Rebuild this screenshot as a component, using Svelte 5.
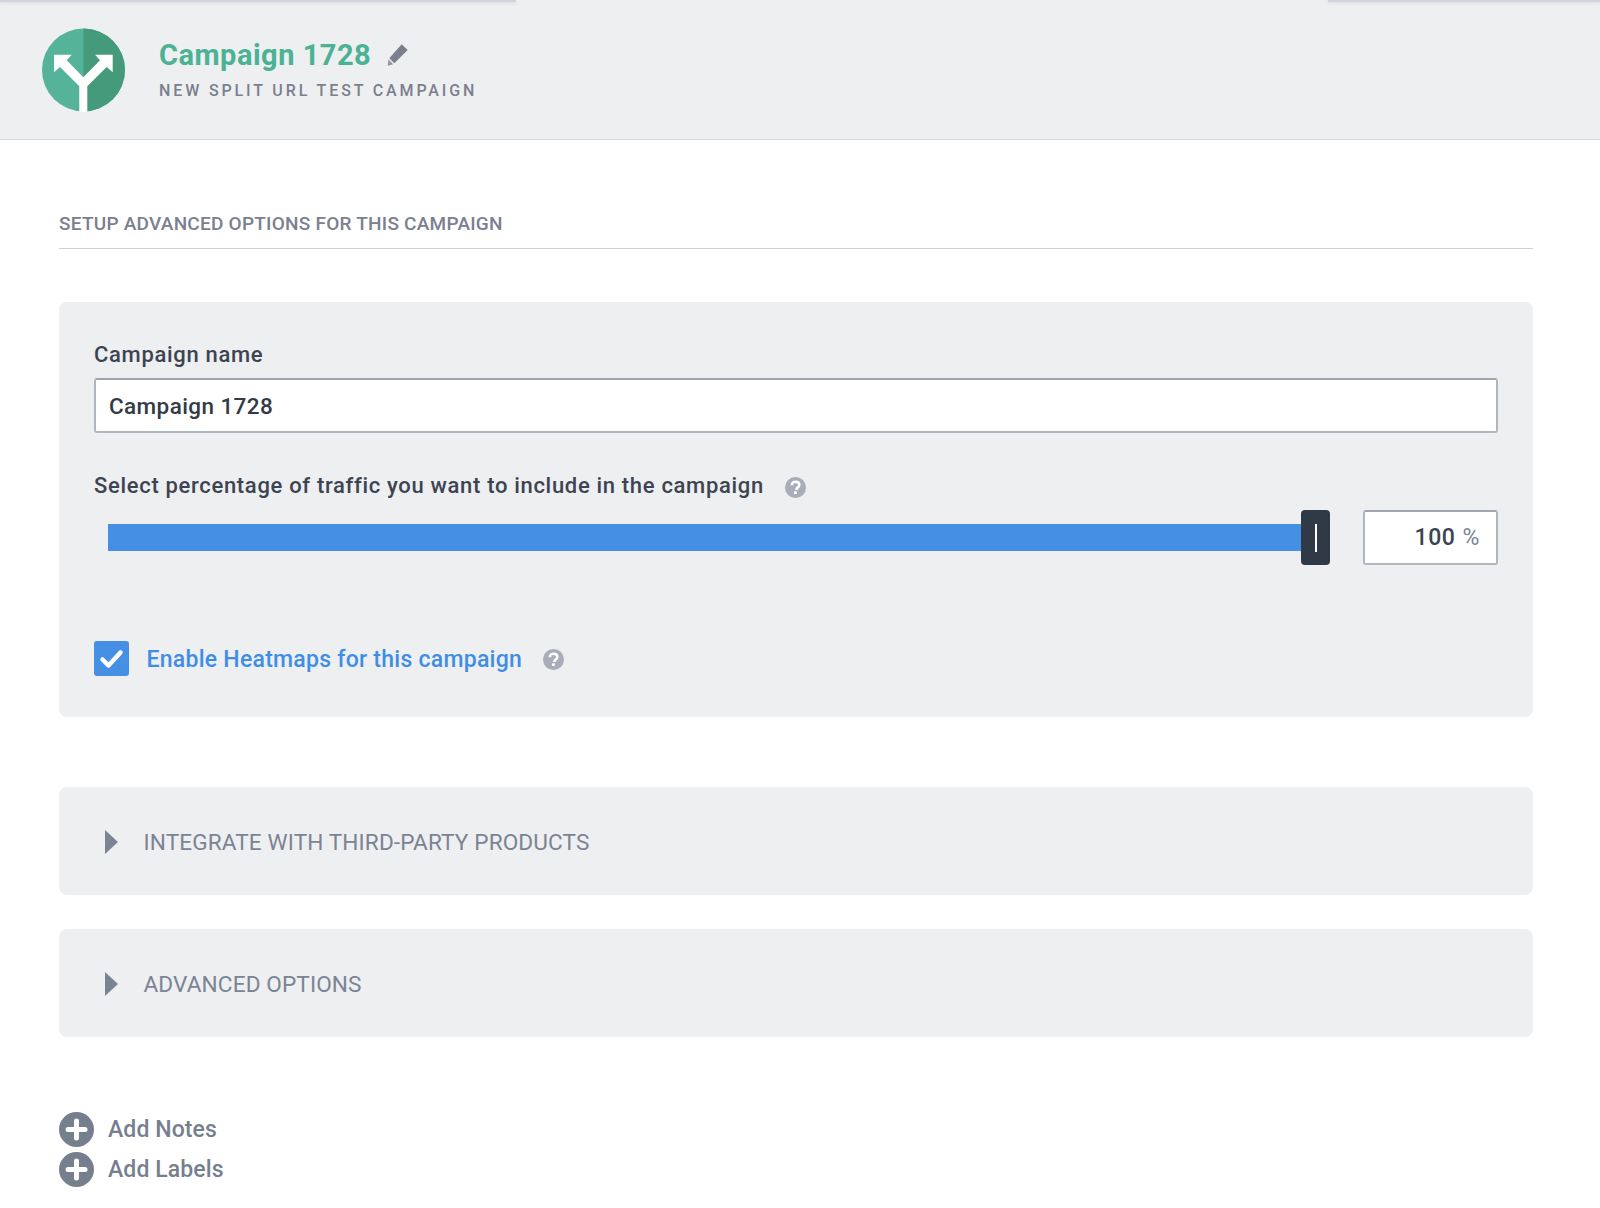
<script>
  let campaign = $state('Campaign 1728')
  let percent = $state(100)
  let heatmaps = $state(true)

  const sections = ['INTEGRATE WITH THIRD-PARTY PRODUCTS', 'ADVANCED OPTIONS']
  const extras = ['Add Notes', 'Add Labels']
</script>

{#snippet help()}
  <svg class="help" viewBox="0 0 21 21" aria-hidden="true">
    <circle cx="10.5" cy="10.5" r="10.5" fill="#a9adb8" />
    <path d="M6.800 8.200c0-2.200 1.500-3.500 3.800-3.500s3.700 1.200 3.700 3.100c0 1.500-.8 2.200-1.700 2.800-.8.600-1.100 1-1.100 1.900v.4" fill="none" stroke="#fff" stroke-width="2.600" />
    <rect x="9" y="14.300" width="2.800" height="2.700" fill="#fff" />
  </svg>
{/snippet}

<div class="page">
  <div class="topline"><span></span><span></span></div>
  <header class="head">
    <svg class="logo" viewBox="0 0 84 84" aria-hidden="true">
      <circle cx="41.500" cy="42" r="41.500" fill="#55b39a" />
      <path d="M41.500 .5a41.500 41.500 0 0 1 0 83z" fill="#459a7b" />
      <path d="M37.300 84V58.300L18 39l-6 5.300V26.700h17.700l-5 5.600 16.600 17 16.700-17-5-5.600h17.700v17.600l-6-5.300-19.400 19.300V84z" fill="#fff" />
    </svg>
    <div class="head-text">
      <div class="title-row">
        <h1>{campaign}</h1>
        <svg class="pencil" viewBox="0 0 22 22" aria-hidden="true">
          <path d="M14.700.3l6 5.600L7.300 19.300l-5-5z" fill="#7b7f8d" />
          <path d="M1.500 15.500l4.700 4.800-5.500 1.400z" fill="#8f939f" />
        </svg>
      </div>
      <div class="sub">NEW SPLIT URL TEST CAMPAIGN</div>
    </div>
  </header>

  <main class="content">
    <h2>SETUP ADVANCED OPTIONS FOR THIS CAMPAIGN</h2>

    <section class="card form">
      <label class="field-label" for="name">Campaign name</label>
      <input id="name" class="name-input" bind:value={campaign} />

      <div class="field-label traffic">
        <span>Select percentage of traffic you want to include in the campaign</span>
        {@render help()}
      </div>
      <div class="slider-row">
        <div class="track"></div>
        <div class="thumb"><i></i></div>
        <div class="percent"><b>{percent}</b><span>%</span></div>
      </div>

      <div class="check-row">
        <button class="check" aria-label="Enable Heatmaps" onclick={() => (heatmaps = !heatmaps)}>
          {#if heatmaps}
            <svg viewBox="0 0 35 35"><path d="M8.500 18.500l6 6 12-13" fill="none" stroke="#fff" stroke-width="4.500" stroke-linecap="round" stroke-linejoin="round" /></svg>
          {/if}
        </button>
        <span class="check-label">Enable Heatmaps for this campaign</span>
        {@render help()}
      </div>
    </section>

    {#each sections as name, i}
      <section class="card fold" class:first={i === 0}>
        <svg class="arrow" viewBox="0 0 13 24" aria-hidden="true"><path d="M0 0l13 12L0 24z" fill="#7b8494" /></svg>
        <span>{name}</span>
      </section>
    {/each}

    <div class="extras">
      {#each extras as name}
        <div class="extra">
          <svg viewBox="0 0 35 35" aria-hidden="true">
            <circle cx="17.500" cy="17.500" r="17.500" fill="#767f8e" />
            <path d="M17.500 9v17M9 17.500h17" stroke="#fff" stroke-width="5" stroke-linecap="round" />
          </svg>
          <span>{name}</span>
        </div>
      {/each}
    </div>
  </main>
</div>

<style>
  :global(body) { margin: 0; background: #fff; }
  .page {
    width: 1600px;
    height: 1208px;
    overflow: hidden;
    position: relative;
    font-family: "Roboto", "Liberation Sans", sans-serif;
    font-weight: 500;
  }
  .topline {
    position: absolute;
    top: 0; left: 0; right: 0;
    display: flex;
    justify-content: space-between;
  }
  .topline span { height: 2px; background: #d3d5de; box-shadow: 0 1px 3px rgba(180, 183, 197, .4); }
  .topline span:first-child { width: 516px; }
  .topline span:last-child { width: 272px; }

  .head {
    height: 140px;
    box-sizing: border-box;
    padding: 28px 0 0 42px;
    display: flex;
    gap: 33px;
    background: #eeeff1;
    border-bottom: 1px solid #d6d8de;
  }
  .logo { width: 84px; height: 84px; flex: none; }
  .head-text { padding-top: 9px; }
  .title-row { display: flex; align-items: center; gap: 16px; height: 36px; }
  h1 {
    margin: 0;
    font-size: 29px;
    font-weight: 700;
    letter-spacing: .5px;
    color: #4bb293;
  }
  .pencil { width: 22px; height: 22px; }
  .sub {
    margin-top: 8px;
    font-size: 16px;
    letter-spacing: 2.87px;
    color: #7b7f8d;
  }

  .content { padding: 72px 67px 0 59px; }
  h2 {
    margin: 0;
    height: 36px;
    font-size: 19px;
    line-height: 24px;
    font-weight: 500;
    letter-spacing: .24px;
    color: #7a808f;
    border-bottom: 1px solid #cfd2d8;
  }
  .card { background: #eeeff1; border-radius: 8px; }
  .form {
    margin-top: 53px;
    height: 415px;
    box-sizing: border-box;
    padding: 40px 35px 0;
  }
  .field-label {
    display: block;
    font-size: 22px;
    line-height: 26px;
    letter-spacing: .68px;
    color: #3d4451;
  }
  .name-input {
    display: block;
    width: 100%;
    height: 55px;
    box-sizing: border-box;
    margin-top: 10px;
    padding: 0 13px;
    font: inherit;
    font-size: 22.500px;
    letter-spacing: .4px;
    color: #333a46;
    background: #fff;
    border: 2px solid #b0b6c1;
    border-top-color: #9ea5b1;
    border-radius: 3px;
    outline: none;
  }
  .traffic { display: flex; align-items: center; gap: 21px; margin-top: 40px; }
  .help { width: 21px; height: 21px; flex: none; margin-top: 2px; }
  .slider-row { display: flex; align-items: center; height: 55px; margin-top: 11px; padding-left: 14px; }
  .track { flex: 1; height: 27px; background: #458fe4; }
  .thumb {
    flex: none;
    width: 29px;
    height: 55px;
    margin-left: -5px;
    box-sizing: border-box;
    display: flex;
    align-items: center;
    justify-content: center;
    background: #2f3a46;
    border-radius: 4px;
  }
  .thumb i { width: 2px; height: 28px; background: #fff; }
  .percent {
    flex: none;
    width: 135px;
    height: 55px;
    margin-left: 33px;
    box-sizing: border-box;
    display: flex;
    align-items: center;
    justify-content: flex-end;
    gap: 7px;
    padding-right: 16px;
    background: #fff;
    border: 2px solid #b0b6c1;
    border-top-color: #9ea5b1;
    border-radius: 3px;
    font-size: 23px;
    letter-spacing: .6px;
    color: #3d4451;
  }
  .percent b { font-weight: 500; }
  .percent span { font-size: 23px; font-weight: 400; color: #7b8494; }
  .check-row { display: flex; align-items: center; margin-top: 75px; height: 36px; }
  .check {
    width: 35px;
    height: 35px;
    padding: 0;
    margin-left: -.5px;
    flex: none;
    background: #458fe4;
    border: 0;
    border-radius: 3px;
  }
  .check svg { display: block; }
  .check-label {
    margin: 2px 21px 0 18px;
    font-size: 23px;
    letter-spacing: .26px;
    color: #3f8ee6;
  }
  .fold {
    height: 108px;
    margin-top: 34px;
    box-sizing: border-box;
    display: flex;
    align-items: center;
    padding: 2px 0 0 46px;
    gap: 26px;
    font-size: 22.600px;
    letter-spacing: .12px;
    font-weight: 400;
    color: #7b8494;
  }
  .fold.first { margin-top: 70px; }
  .arrow { width: 13px; height: 24px; flex: none; margin-left: -.5px; }
  .extras { margin-top: 75px; display: flex; flex-direction: column; gap: 5px; }
  .extra {
    display: flex;
    align-items: center;
    gap: 14px;
    height: 35px;
    font-size: 23px;
    letter-spacing: .1px;
    color: #767f8e;
  }
  .extra svg { width: 35px; height: 35px; flex: none; }
</style>
